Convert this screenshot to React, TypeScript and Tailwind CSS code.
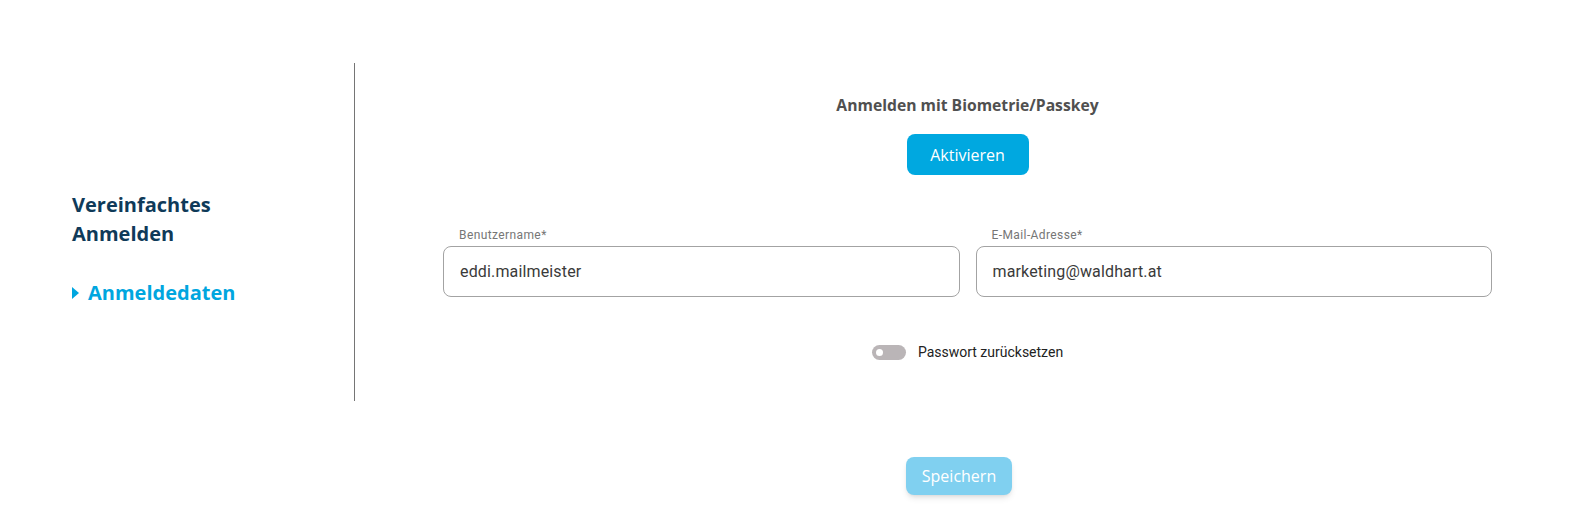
import { useState } from "react";

function Field({ label, value }: { label: string; value: string }) {
    return (
        <div className="flex-1 flex flex-col">
            <label className="text-[12px] leading-[14px] tracking-[0.4px] text-[#767676] pl-4 mb-[4px]">{label}</label>
            <input
                defaultValue={value}
                className="h-[51px] rounded-lg border border-[#a3a3a3] px-4 text-[16px] tracking-[0.15px] text-[#3a3a3a] outline-none bg-white"
            />
        </div>
    );
}

export default function App() {
    const [reset, setReset] = useState(false);

    return (
        <div className="w-[1584px] h-[528px] bg-white pt-[63px] font-['Roboto',sans-serif]">
            <div className="flex">
                {/* Sidebar */}
                <div className="w-[355px] h-[338px] border-r border-[#757575] pl-[72px] pt-[127px] font-['Open_Sans',sans-serif]">
                    <h2 className="text-[20px] font-bold leading-[29px] text-[#0f3a59]">
                        Vereinfachtes
                        <br />
                        Anmelden
                    </h2>
                    <div className="mt-[30px] flex items-center gap-[9px] text-[20px] font-bold leading-[29px] text-[#00a6df]">
                        <svg width="7" height="12" viewBox="0 0 7 12">
                            <path d="M0 0 L7 6 L0 12 Z" fill="#00a6df" />
                        </svg>
                        Anmeldedaten
                    </div>
                </div>

                {/* Main */}
                <div className="flex-1 pl-[88px] pr-[92px] pt-[31px]">
                    <div className="flex flex-col items-center font-['Open_Sans',sans-serif]">
                        <h3 className="text-[15.7px] font-bold leading-[22px] text-[#505050]">Anmelden mit Biometrie/Passkey</h3>
                        <button className="mt-[18px] h-[41px] w-[122px] rounded-lg bg-[#00a8e0] text-white text-[16px] font-medium">
                            Aktivieren
                        </button>
                    </div>

                    <div className="mt-[53px] flex gap-4">
                        <Field label="Benutzername*" value="eddi.mailmeister" />
                        <Field label="E-Mail-Adresse*" value="marketing@waldhart.at" />
                    </div>

                    <div className="mt-[45px] flex justify-center items-center gap-3">
                        <button
                            onClick={() => setReset(!reset)}
                            className="w-[34px] h-[15px] rounded-full bg-[#bab5b7] flex items-center px-[4px]"
                        >
                            <span className="w-[7px] h-[7px] rounded-full bg-white" />
                        </button>
                        <span className="text-[14px] text-[#222]">Passwort zurücksetzen</span>
                    </div>
                </div>
            </div>

            <div className="flex justify-center pl-[355px] pt-[56px]">
                <button className="mr-[21px] h-[38px] w-[106px] rounded-lg bg-[#80d0f0] text-white text-[16px] font-medium font-['Open_Sans',sans-serif] shadow-md">
                    Speichern
                </button>
            </div>
        </div>
    );
}
